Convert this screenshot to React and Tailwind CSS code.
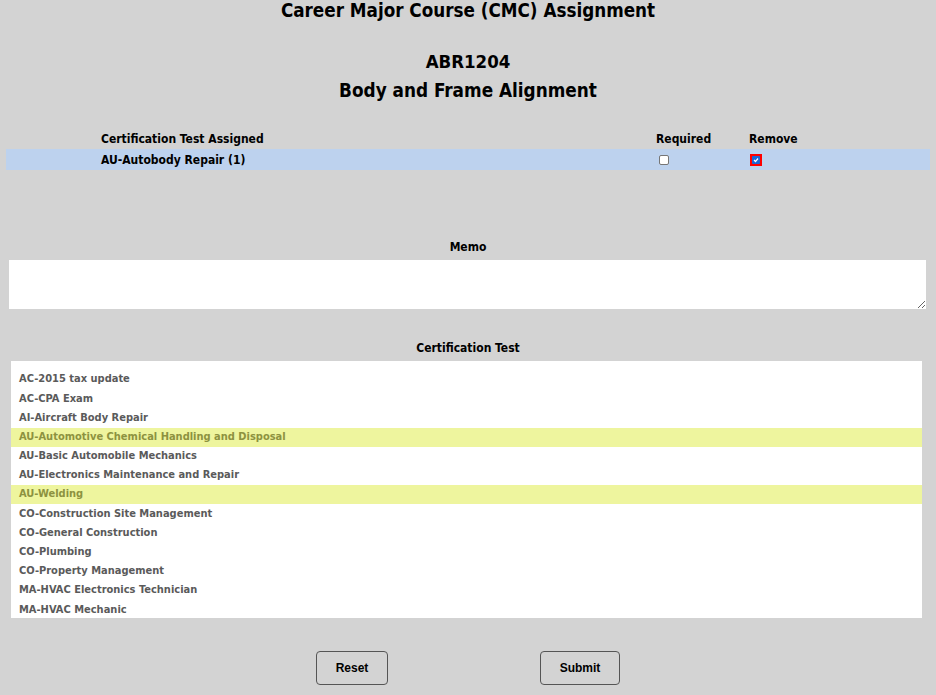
import React, { useState } from "react";

const tests = [
  "AC-2015 tax update",
  "AC-CPA Exam",
  "AI-Aircraft Body Repair",
  "AU-Automotive Chemical Handling and Disposal",
  "AU-Basic Automobile Mechanics",
  "AU-Electronics Maintenance and Repair",
  "AU-Welding",
  "CO-Construction Site Management",
  "CO-General Construction",
  "CO-Plumbing",
  "CO-Property Management",
  "MA-HVAC Electronics Technician",
  "MA-HVAC Mechanic",
];

const highlighted = ["AU-Automotive Chemical Handling and Disposal", "AU-Welding"];

export default function App() {
  const [memo, setMemo] = useState("");

  return (
    <div
      className="min-h-[695px] bg-[#d3d3d3] text-black font-stretch-condensed"
      style={{ fontFamily: '"DejaVu Sans Condensed", "DejaVu Sans", sans-serif' }}
    >
      {/* titles */}
      <div className="flex flex-col items-center font-bold">
        <h1 className="text-[18.7px] leading-[21px] pt-0">Career Major Course (CMC) Assignment</h1>
        <h2 className="text-[18.5px] leading-[22px] mt-[30px]">ABR1204</h2>
        <h2 className="text-[18.8px] leading-[22px] mt-[7px]">Body and Frame Alignment</h2>
      </div>

      {/* assigned table */}
      <div className="mt-[27px] px-[6px]">
        <div className="flex h-[20px] items-center text-[12px] font-bold">
          <div className="pl-[95px] w-[650px]">Certification Test Assigned</div>
          <div className="w-[93px]">Required</div>
          <div>Remove</div>
        </div>
        <div className="flex h-[21px] items-center bg-[#bdd2ee] text-[12px] font-bold">
          <div className="pl-[95px] w-[650px]">AU-Autobody Repair (1)</div>
          <div className="w-[93px] pl-[3px] flex items-center">
            <span className="block w-[10px] h-[10px] rounded-[2px] border border-[#767676] bg-white" />
          </div>
          <div className="pl-[1px] flex items-center">
            <span className="flex items-center justify-center w-[12px] h-[12px] bg-[#ff0000]">
              <span className="flex items-center justify-center w-[8px] h-[8px] bg-[#1a66d8] rounded-[1px]">
                <svg width="6" height="6" viewBox="0 0 6 6">
                  <path d="M1 3 L2.5 4.5 L5 1.5" stroke="white" strokeWidth="1.2" fill="none" />
                </svg>
              </span>
            </span>
          </div>
        </div>
      </div>

      {/* memo */}
      <div className="mt-[67px] px-[9px]">
        <div className="text-center text-[12px] font-bold leading-[20px]">Memo</div>
        <textarea
          value={memo}
          onChange={(e) => setMemo(e.target.value)}
          className="block mt-[3px] w-[917px] h-[49px] bg-white border-0 outline-none"
        />
      </div>

      {/* certification test list */}
      <div className="mt-[29px] px-[11px]">
        <div className="text-center text-[12px] font-bold leading-[20px]">Certification Test</div>
        <div className="mt-[3px] w-[911px] h-[257px] bg-white pt-[9px] overflow-hidden">
          {tests.map((t) => {
            const hl = highlighted.includes(t);
            return (
              <div
                key={t}
                className={
                  "h-[19.2px] flex items-center pl-[8px] text-[11px] font-bold " +
                  (hl ? "bg-[#eef59e] text-[#8d9240]" : "text-[#5a5a5a]")
                }
              >
                {t}
              </div>
            );
          })}
        </div>
      </div>

      {/* buttons */}
      <div
        className="mt-[33px] flex font-stretch-normal"
        style={{ fontFamily: '"Liberation Sans", Arial, sans-serif' }}
      >
        <button className="ml-[316px] w-[72px] h-[34px] rounded-[4px] border border-[#555] bg-[#d3d3d3] text-[12px] font-bold">
          Reset
        </button>
        <button className="ml-[152px] w-[80px] h-[34px] rounded-[4px] border border-[#555] bg-[#d3d3d3] text-[12px] font-bold">
          Submit
        </button>
      </div>
    </div>
  );
}
